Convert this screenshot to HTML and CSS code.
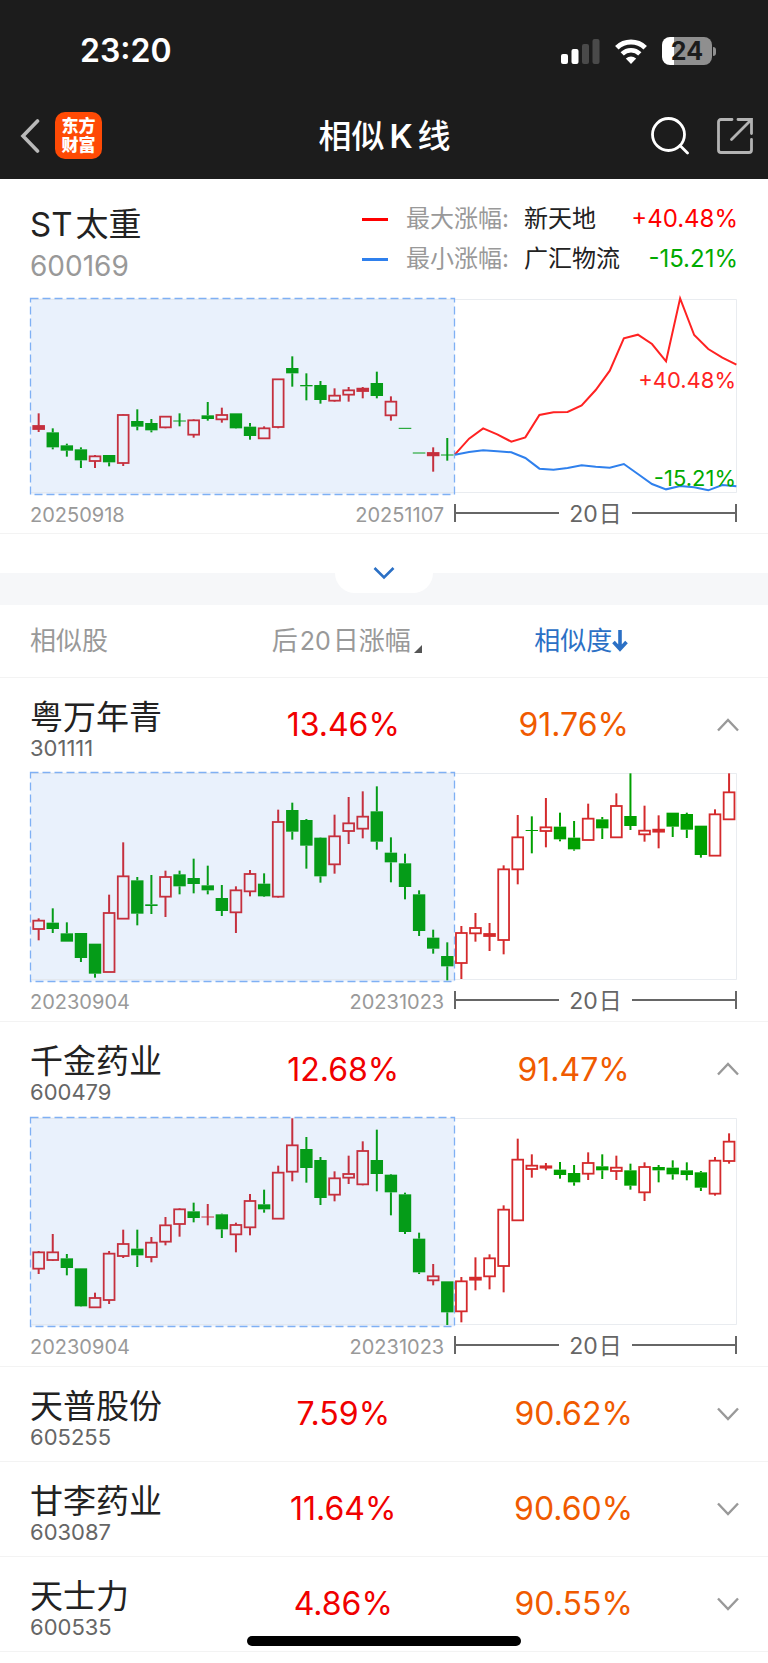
FILE: index.html
```html
<!DOCTYPE html>
<html lang="zh-CN">
<head>
<meta charset="utf-8">
<meta name="viewport" content="width=device-width, initial-scale=1">
<title>相似K线</title>
<link rel="stylesheet" href="styles.css">
</head>
<body>
<header class="top">
  <div class="status">
    <time class="clock">23:20</time>
    <div class="status-icons">
      <svg class="signal" viewBox="0 0 39 25" width="39" height="25" aria-hidden="true">
        <rect x="0" y="15" width="7" height="10" rx="2" fill="#fff"/>
        <rect x="10.5" y="10" width="7" height="15" rx="2" fill="#fff"/>
        <rect x="21" y="5" width="7" height="20" rx="2" fill="#4a4a4a"/>
        <rect x="31.5" y="0" width="7" height="25" rx="2" fill="#4a4a4a"/>
      </svg>
      <svg class="wifi" viewBox="0 0 34 25" width="34" height="25" aria-hidden="true">
        <path d="M2.800 8.800A20.500 20.500 0 0 1 31.200 8.800" fill="none" stroke="#fff" stroke-width="5"/>
        <path d="M8.200 14.800A12.600 12.600 0 0 1 25.800 14.800" fill="none" stroke="#fff" stroke-width="4.600"/>
        <path d="M17 25L11.800 19.600Q17 15.400 22.200 19.600Z" fill="#fff"/>
      </svg>
      <div class="battery"><span class="battery-cell">24</span><span class="battery-tip"></span></div>
    </div>
  </div>
  <nav class="bar">
    <div class="bar-side bar-left">
      <button class="icon-btn" aria-label="返回">
        <svg viewBox="0 0 20 36" width="20" height="36"><path d="M17.500 3L3 18L17.500 33" fill="none" stroke="#b9b9b9" stroke-width="3.600" stroke-linecap="round"/></svg>
      </button>
      <a class="logo" href="#"><span>东方</span><span>财富</span></a>
    </div>
    <h1 class="title">相似<span class="title-k">K</span>线</h1>
    <div class="bar-side bar-right">
      <button class="icon-btn" aria-label="搜索">
        <svg viewBox="0 0 38 38" width="38" height="38"><circle cx="17.500" cy="17.500" r="16" fill="none" stroke="#fff" stroke-width="2.800"/><path d="M29 28.500L36.500 36" stroke="#fff" stroke-width="2.800" stroke-linecap="round"/></svg>
      </button>
      <button class="icon-btn" aria-label="分享">
        <svg viewBox="0 0 36 36" width="36" height="36"><path d="M15 1.500H4Q1.500 1.500 1.500 4V32Q1.500 34.500 4 34.500H32Q34.500 34.500 34.500 32V21.500M21 1.500H34.500V15.500M34 2L14.500 21.500" fill="none" stroke="#b3b3b3" stroke-width="2.800" stroke-linecap="round"/></svg>
      </button>
    </div>
  </nav>
</header>

<main>
  <section class="subject">
    <div class="subject-head">
      <div class="subject-id">
        <h2 class="subject-name">ST<span class="cjk-gap">太重</span></h2>
        <p class="subject-code">600169</p>
      </div>
      <dl class="legend">
        <div class="legend-row"><dt><i class="dash dash-max"></i>最大涨幅:</dt><dd class="legend-stock">新天地</dd><dd class="legend-value up">+40.48%</dd></div>
        <div class="legend-row"><dt><i class="dash dash-min"></i>最小涨幅:</dt><dd class="legend-stock">广汇物流</dd><dd class="legend-value down">-15.21%</dd></div>
      </dl>
    </div>
    <svg class="chart" viewBox="0 0 708 197" data-chart="subject" role="img" aria-label="ST太重 K线"></svg>
    <div class="axis">
      <div class="dates"><span>20250918</span><span>20251107</span></div>
      <div class="span"><i class="rule rule-left"></i><span>20<span class="day">日</span></span><i class="rule rule-right"></i></div>
    </div>
  </section>

  <div class="fold">
    <button class="fold-tab" aria-label="展开">
      <svg viewBox="0 0 24 16" width="24" height="16"><path d="M2.500 3L12 12.500L21.500 3" fill="none" stroke="#2b70c5" stroke-width="2.600"/></svg>
    </button>
  </div>

  <table class="list">
    <thead>
      <tr>
        <th class="c-name" scope="col">相似股</th>
        <th class="c-growth" scope="col"><button class="sort">后<span class="num">20</span>日涨幅<svg class="tri" viewBox="0 0 8 8" width="8" height="8"><path d="M8 0V8H0Z" fill="#555"/></svg></button></th>
        <th class="c-score" scope="col"><button class="sort active">相似度<svg class="arrow" viewBox="0 0 16 22" width="16" height="22"><path d="M8 0V18M1.500 12L8 19L14.500 12" fill="none" stroke="#2b70c5" stroke-width="3.600"/></svg></button></th>
        <th class="c-more" scope="col"></th>
      </tr>
    </thead>
    <tbody>
      <tr class="stock open">
        <td class="c-name"><strong>粤万年青</strong><small>301111</small></td>
        <td class="c-growth">13.46%</td><td class="c-score">91.76%</td>
        <td class="c-more"><button class="icon-btn" aria-label="收起"><svg viewBox="0 0 24 16" width="24" height="16"><path d="M2 13.500L12 3L22 13.500" fill="none" stroke="#999" stroke-width="2.400"/></svg></button></td>
      </tr>
      <tr class="detail">
        <td colspan="4">
          <svg class="chart" viewBox="0 0 708 210" data-chart="s301111" role="img" aria-label="粤万年青 K线"></svg>
          <div class="axis">
            <div class="dates"><span>20230904</span><span>20231023</span></div>
            <div class="span"><i class="rule rule-left"></i><span>20<span class="day">日</span></span><i class="rule rule-right"></i></div>
          </div>
        </td>
      </tr>
      <tr class="stock open">
        <td class="c-name"><strong>千金药业</strong><small>600479</small></td>
        <td class="c-growth">12.68%</td><td class="c-score">91.47%</td>
        <td class="c-more"><button class="icon-btn" aria-label="收起"><svg viewBox="0 0 24 16" width="24" height="16"><path d="M2 13.500L12 3L22 13.500" fill="none" stroke="#999" stroke-width="2.400"/></svg></button></td>
      </tr>
      <tr class="detail">
        <td colspan="4">
          <svg class="chart" viewBox="0 0 708 210" data-chart="s600479" role="img" aria-label="千金药业 K线"></svg>
          <div class="axis">
            <div class="dates"><span>20230904</span><span>20231023</span></div>
            <div class="span"><i class="rule rule-left"></i><span>20<span class="day">日</span></span><i class="rule rule-right"></i></div>
          </div>
        </td>
      </tr>
      <tr class="stock">
        <td class="c-name"><strong>天普股份</strong><small>605255</small></td>
        <td class="c-growth">7.59%</td><td class="c-score">90.62%</td>
        <td class="c-more"><button class="icon-btn" aria-label="展开"><svg viewBox="0 0 24 16" width="24" height="16"><path d="M2 2.500L12 13L22 2.500" fill="none" stroke="#999" stroke-width="2.400"/></svg></button></td>
      </tr>
      <tr class="stock">
        <td class="c-name"><strong>甘李药业</strong><small>603087</small></td>
        <td class="c-growth">11.64%</td><td class="c-score">90.60%</td>
        <td class="c-more"><button class="icon-btn" aria-label="展开"><svg viewBox="0 0 24 16" width="24" height="16"><path d="M2 2.500L12 13L22 2.500" fill="none" stroke="#999" stroke-width="2.400"/></svg></button></td>
      </tr>
      <tr class="stock">
        <td class="c-name"><strong>天士力</strong><small>600535</small></td>
        <td class="c-growth">4.86%</td><td class="c-score">90.55%</td>
        <td class="c-more"><button class="icon-btn" aria-label="展开"><svg viewBox="0 0 24 16" width="24" height="16"><path d="M2 2.500L12 13L22 2.500" fill="none" stroke="#999" stroke-width="2.400"/></svg></button></td>
      </tr>
    </tbody>
  </table>
</main>
<div class="home-indicator"></div>
<script src="charts.js"></script>
</body>
</html>
```

FILE: styles.css
```css
* { box-sizing: border-box; }

body {
  margin: 0;
  background: #fff;
  color: #222;
  font-family: Inter, "Noto Sans CJK SC", sans-serif;
}

h1, h2, p, dl, dd { margin: 0; font-weight: 400; }

button {
  padding: 0;
  border: 0;
  background: none;
  color: inherit;
  font: inherit;
  cursor: pointer;
}

svg { display: block; }
.icon-btn { display: block; }

/* Dark header */
.top { background: #1c1c1c; color: #fff; }

.status {
  display: flex;
  justify-content: space-between;
  align-items: center;
  height: 102px;
  padding: 0 52px 0 80px;
}

.clock { font-size: 32px; font-weight: 600; line-height: 42px; }

.status-icons { display: flex; align-items: center; gap: 14px; }

.battery { display: flex; align-items: center; gap: 1px; }

.battery-cell {
  width: 50px;
  height: 28px;
  border-radius: 8px;
  background: linear-gradient(90deg, #fff 12px, #8f8f8f 12px);
  color: #1c1c1c;
  font-size: 25px;
  font-weight: 700;
  line-height: 28px;
  text-align: center;
}

.battery-tip { width: 3px; height: 9px; border-radius: 0 4px 4px 0; background: #8f8f8f; }

.bar {
  display: flex;
  align-items: center;
  justify-content: space-between;
  height: 77px;
  padding: 0 15px 10px;
}

.bar-side { display: flex; flex: 1; align-items: center; }
.bar-left { gap: 15px; padding-left: 5px; }
.bar-right { justify-content: flex-end; gap: 28px; }

.logo {
  display: flex;
  flex-direction: column;
  align-items: center;
  justify-content: center;
  width: 47px;
  height: 47px;
  border-radius: 10px;
  background: #ff4a05;
  color: #fff;
  font-size: 17px;
  font-weight: 900;
  line-height: 19px;
  text-decoration: none;
}

.title { padding-right: 4px; font-size: 33px; font-weight: 500; line-height: 48px; }
.title-k { margin: 0 5px; font-weight: 600; }

/* Subject stock */
.subject { padding: 0 30px; border-bottom: 1px solid #f3f3f3; }

.subject-head {
  display: flex;
  justify-content: space-between;
  height: 119px;
  padding-top: 20px;
}

.subject-name { font-size: 33px; line-height: 50px; }
.cjk-gap { margin-left: 3px; }
.subject-code { color: #999; font-size: 28px; line-height: 34px; }

.legend { width: 376px; font-size: 24px; line-height: 40px; }
.legend-row { display: flex; align-items: center; height: 40px; }
.legend dt { display: flex; align-items: center; gap: 18px; width: 162px; color: #999; }
.legend-value { margin-left: auto; }
.dash { width: 26px; height: 3px; }
.dash-max { background: #f00; }
.dash-min { background: #2f80ed; }
.up { color: #f00; }
.down { color: #0a0; }

/* Charts */
.chart { width: 100%; height: auto; overflow: visible; }
.chart-label { font-size: 22px; text-anchor: end; }
.label-up { fill: #f22; }
.label-down { fill: #0a0; }

.axis {
  display: grid;
  grid-template-columns: 3fr 2fr;
  height: 38px;
  padding-right: 1px;
}

.detail .axis { height: 39px; }

.dates {
  display: flex;
  justify-content: space-between;
  padding-right: 10px;
  color: #999;
  font-size: 20px;
  line-height: 40px;
}

.span {
  display: flex;
  justify-content: space-between;
  height: 38px;
  color: #666;
  font-size: 23px;
  line-height: 38px;
}

.day { margin-left: 1px; }
.rule { display: flex; align-items: center; width: 37%; height: 18px; margin-top: 9px; }
.rule::before { width: 100%; height: 2px; background: #666; content: ""; }
.rule-left { border-left: 2px solid #666; }
.rule-right { border-right: 2px solid #666; }

/* Fold band */
.fold { height: 71px; border-bottom: 32px solid #f6f7f9; }

.fold-tab {
  display: flex;
  align-items: center;
  justify-content: center;
  position: relative;
  width: 98px;
  height: 59px;
  margin: 0 auto;
  padding-top: 18px;
  border-radius: 0 0 20px 20px;
  background: #fff;
}

/* Similar stocks */
.list { width: 100%; border-collapse: collapse; table-layout: fixed; }
.list th, .list td { padding: 0; font-weight: 400; }
.list thead tr { height: 72px; border-bottom: 1px solid #f3f3f3; }
.list th { color: #999; font-size: 26px; line-height: 40px; }
.c-name { width: 30%; text-align: left; }
.list .c-name { padding-left: 30px; }
.c-growth { width: 29%; text-align: center; }
.c-score { width: 31%; text-align: center; }
.c-more { width: 10%; }
.list th.c-growth { padding-left: 10px; }
.list th.c-score { padding-left: 18px; }
.list td.c-growth, .list td.c-score { padding-left: 3px; }

.sort { display: inline-flex; align-items: center; }
.sort.active { color: #2b70c5; }
.num { margin: 0 2px; font-size: 25px; }
.tri { align-self: flex-end; margin: 0 0 8px 3px; }

.stock { height: 95px; border-bottom: 1px solid #f3f3f3; }
.stock.open { border-bottom: 0; }
.stock strong { display: block; padding-top: 6px; font-size: 33px; font-weight: 400; line-height: 40px; }
.stock small { display: block; color: #666; font-size: 22px; line-height: 22px; }
.stock .c-growth { color: #f00000; font-size: 32px; }
.stock .c-score { color: #f05a00; font-size: 32px; }
.stock .icon-btn { margin-left: 25px; }
.detail { border-bottom: 1px solid #f3f3f3; }
.list .detail td { padding: 0 30px; }

.home-indicator {
  position: fixed;
  bottom: 17px;
  left: 50%;
  width: 274px;
  height: 10px;
  margin-left: -137px;
  border-radius: 5px;
  background: #000;
}
```

FILE: charts.js
```js
// Candle rows: colour, high, body top, body bottom, low. Three units per pixel.
const UNIT = 3;
const STEP = 42.27;
const FIRST = 26;
const PAST = 30;

const charts = {
  subject: {
    height: 196,
    parts: [{ top: 39, rows: `r 385 423 432 441,g 430 442 487 493,g 476 481 497 515,g 487 493 526 549,r 510 514 528 549,g 510 510 532 544,
      r 388 390 534 543,g 373 408 425 436,g 402 414 436 442,r 394 395 427 430,g 385 408 408 424,r 403 406 449 458,g 351 391 402 407,
      r 368 390 403 413,g 385 385 430 431,g 414 425 453 464,r 424 430 460 460,r 282 283 426 430,g 214 249 265 305,g 265 300 304 346,
      g 288 300 345 356,r 310 332 347 350,r 306 316 329 350,r 306 311 318 340,g 260 294 333 340,r 334 350 391 407,g 430 430 430 430,
      g 504 504 504 504,r 487 504 511 560,g 459 510 510 527` }],
    lines: [
      ['#f22', [508, 461, 430, 448, 470, 457, 390, 382, 381, 361, 315, 257, 160, 149, 177, 229, 40, 150, 192, 218, 239]],
      ['#2f80ed', [509, 501, 496, 499, 502, 519, 551, 554, 549, 541, 545, 548, 537, 567, 597, 613, 603, 607, 616, 600, 604]]
    ],
    labels: [['+40.48%', 90, 'label-up'], ['-15.21%', 188, 'label-down']]
  },
  s301111: {
    height: 209,
    parts: [
      { top: 36, rows: `r 475 482 507 541,g 445 488 507 519,g 487 520 545 545,g 519 519 594 606,g 551 551 641 653,r 404 459 636 636,
        r 247 349 476 476,g 351 361 461 496,g 345 433 438 462,r 332 351 410 471,g 332 343 379 403,g 296 354 372 400,g 317 376 391 403,
        g 375 414 453 468,r 379 391 457 519,r 330 342 394 409,g 340 371 409 411,r 149 186 410 413,g 128 150 215 239,g 177 180 257 326,
        g 232 233 349 368,r 164 229 313 341,r 111 190 213 252,r 94 170 206 235,g 79 154 245 269,g 232 278 307 367,g 281 310 381 418,
        g 391 403 513 528,g 509 533 566 581,g 547 588 619 661` },
      { top: 516, rows: `r 978 999 1089 1137,r 939 984 1000 1025,r 969 1002 1008 1053,r 796 808 1020 1063,r 645 712 808 853,
        g 649 690 693 760,r 594 682 693 742,g 638 680 718 724,g 663 713 748 752,r 611 656 720 720,g 651 658 685 717,r 580 618 712 712,
        g 520 648 678 690,r 617 692 703 725,r 646 689 695 745,g 638 638 680 711,g 638 642 689 714,g 677 677 765 773,r 628 643 767 767,
        r 520 577 658 658` }
    ]
  },
  s600479: {
    height: 209,
    parts: [{ top: 290, rows: `r 692 696 745 761,r 641 696 719 722,g 701 714 743 765,g 744 744 858 859,r 817 833 861 861,r 692 700 839 851,
      r 628 671 707 713,g 628 685 705 740,r 650 667 710 726,r 590 615 664 675,r 564 567 611 649,g 547 573 593 606,r 551 590 590 615,
      g 580 582 627 653,r 607 614 642 696,r 521 542 621 645,g 508 552 567 577,r 436 457 595 595,r 294 375 454 483,g 350 386 443 487,
      g 410 419 533 554,r 453 474 523 543,r 406 461 472 491,r 363 392 492 495,g 328 419 461 513,g 461 463 516 585,g 517 522 635 641,
      g 637 655 756 761,r 731 768 780 795,g 783 783 876 914,r 770 783 873 906,r 711 772 778 810,r 702 714 768 807,r 555 568 737 816,
      r 355 418 600 600,r 402 436 446 472,r 428 438 442 450,g 425 448 464 475,g 434 458 486 496,r 396 428 460 479,g 402 438 450 476,
      r 406 442 452 479,g 430 450 496 508,r 426 440 516 542,g 434 440 450 486,g 420 442 462 478,g 426 450 464 480,g 452 456 502 512,
      r 410 421 520 526,r 339 364 422 430` }]
  }
};

function candle(row, index, top) {
  const [kind, ...values] = row.trim().split(' ');
  const [high, open, close, low] = values.map(v => (v - top) / UNIT);
  const x = (FIRST + STEP * index) / UNIT;
  const inside = index < PAST;
  const colour = kind === 'r' ? (inside ? '#c5303e' : '#d42a2c') : (inside ? '#059c18' : '#00a000');
  const wick = (a, b) => `<path d="M${x} ${a}V${b}" stroke="${colour}" stroke-width="2"/>`;
  const parts = [];
  if (open > high) parts.push(wick(high, open));
  if (low > close) parts.push(wick(close, low));
  if (close - open < 0.5) {
    parts.push(`<path d="M${x - 6.3} ${open}H${x + 6.3}" stroke="${colour}" stroke-width="1"/>`);
  } else if (kind === 'g') {
    parts.push(`<rect x="${x - 6.2}" y="${open}" width="12.4" height="${close - open}" fill="${colour}"/>`);
  } else {
    const fill = close - open < 3.2 ? colour : 'none';
    parts.push(`<rect x="${x - 5.4}" y="${open}" width="10.8" height="${close - open}" fill="${fill}" stroke="${colour}" stroke-width="1.800"/>`);
  }
  return parts.join('');
}

document.querySelectorAll('[data-chart]').forEach(svg => {
  const chart = charts[svg.dataset.chart];
  const h = chart.height;
  let out = `<rect x="0.500" y="0.500" width="424" height="${h}" fill="#e9f1fc"/>
    <path d="M0 1.500H706.500V${h - 1.500}H0" fill="none" stroke="#e0e4ea" stroke-opacity="0.700"/>
    <rect x="0.500" y="0.500" width="424" height="${h}" fill="none" stroke="#7fb0f4" stroke-width="1.300" stroke-dasharray="8 4"/>`;
  let index = 0;
  chart.parts.forEach(part => part.rows.split(',').forEach(row => { out += candle(row, index++, part.top); }));
  (chart.lines || []).forEach(([colour, ys]) => {
    const points = ys.map((y, i) => `${425 + i * 14.07},${(y - 39) / UNIT}`).join(' ');
    out += `<polyline points="${points}" fill="none" stroke="${colour}" stroke-width="2"/>`;
  });
  (chart.labels || []).forEach(([text, y, name]) => { out += `<text class="chart-label ${name}" x="706" y="${y}">${text}</text>`; });
  svg.innerHTML = out;
});
```
